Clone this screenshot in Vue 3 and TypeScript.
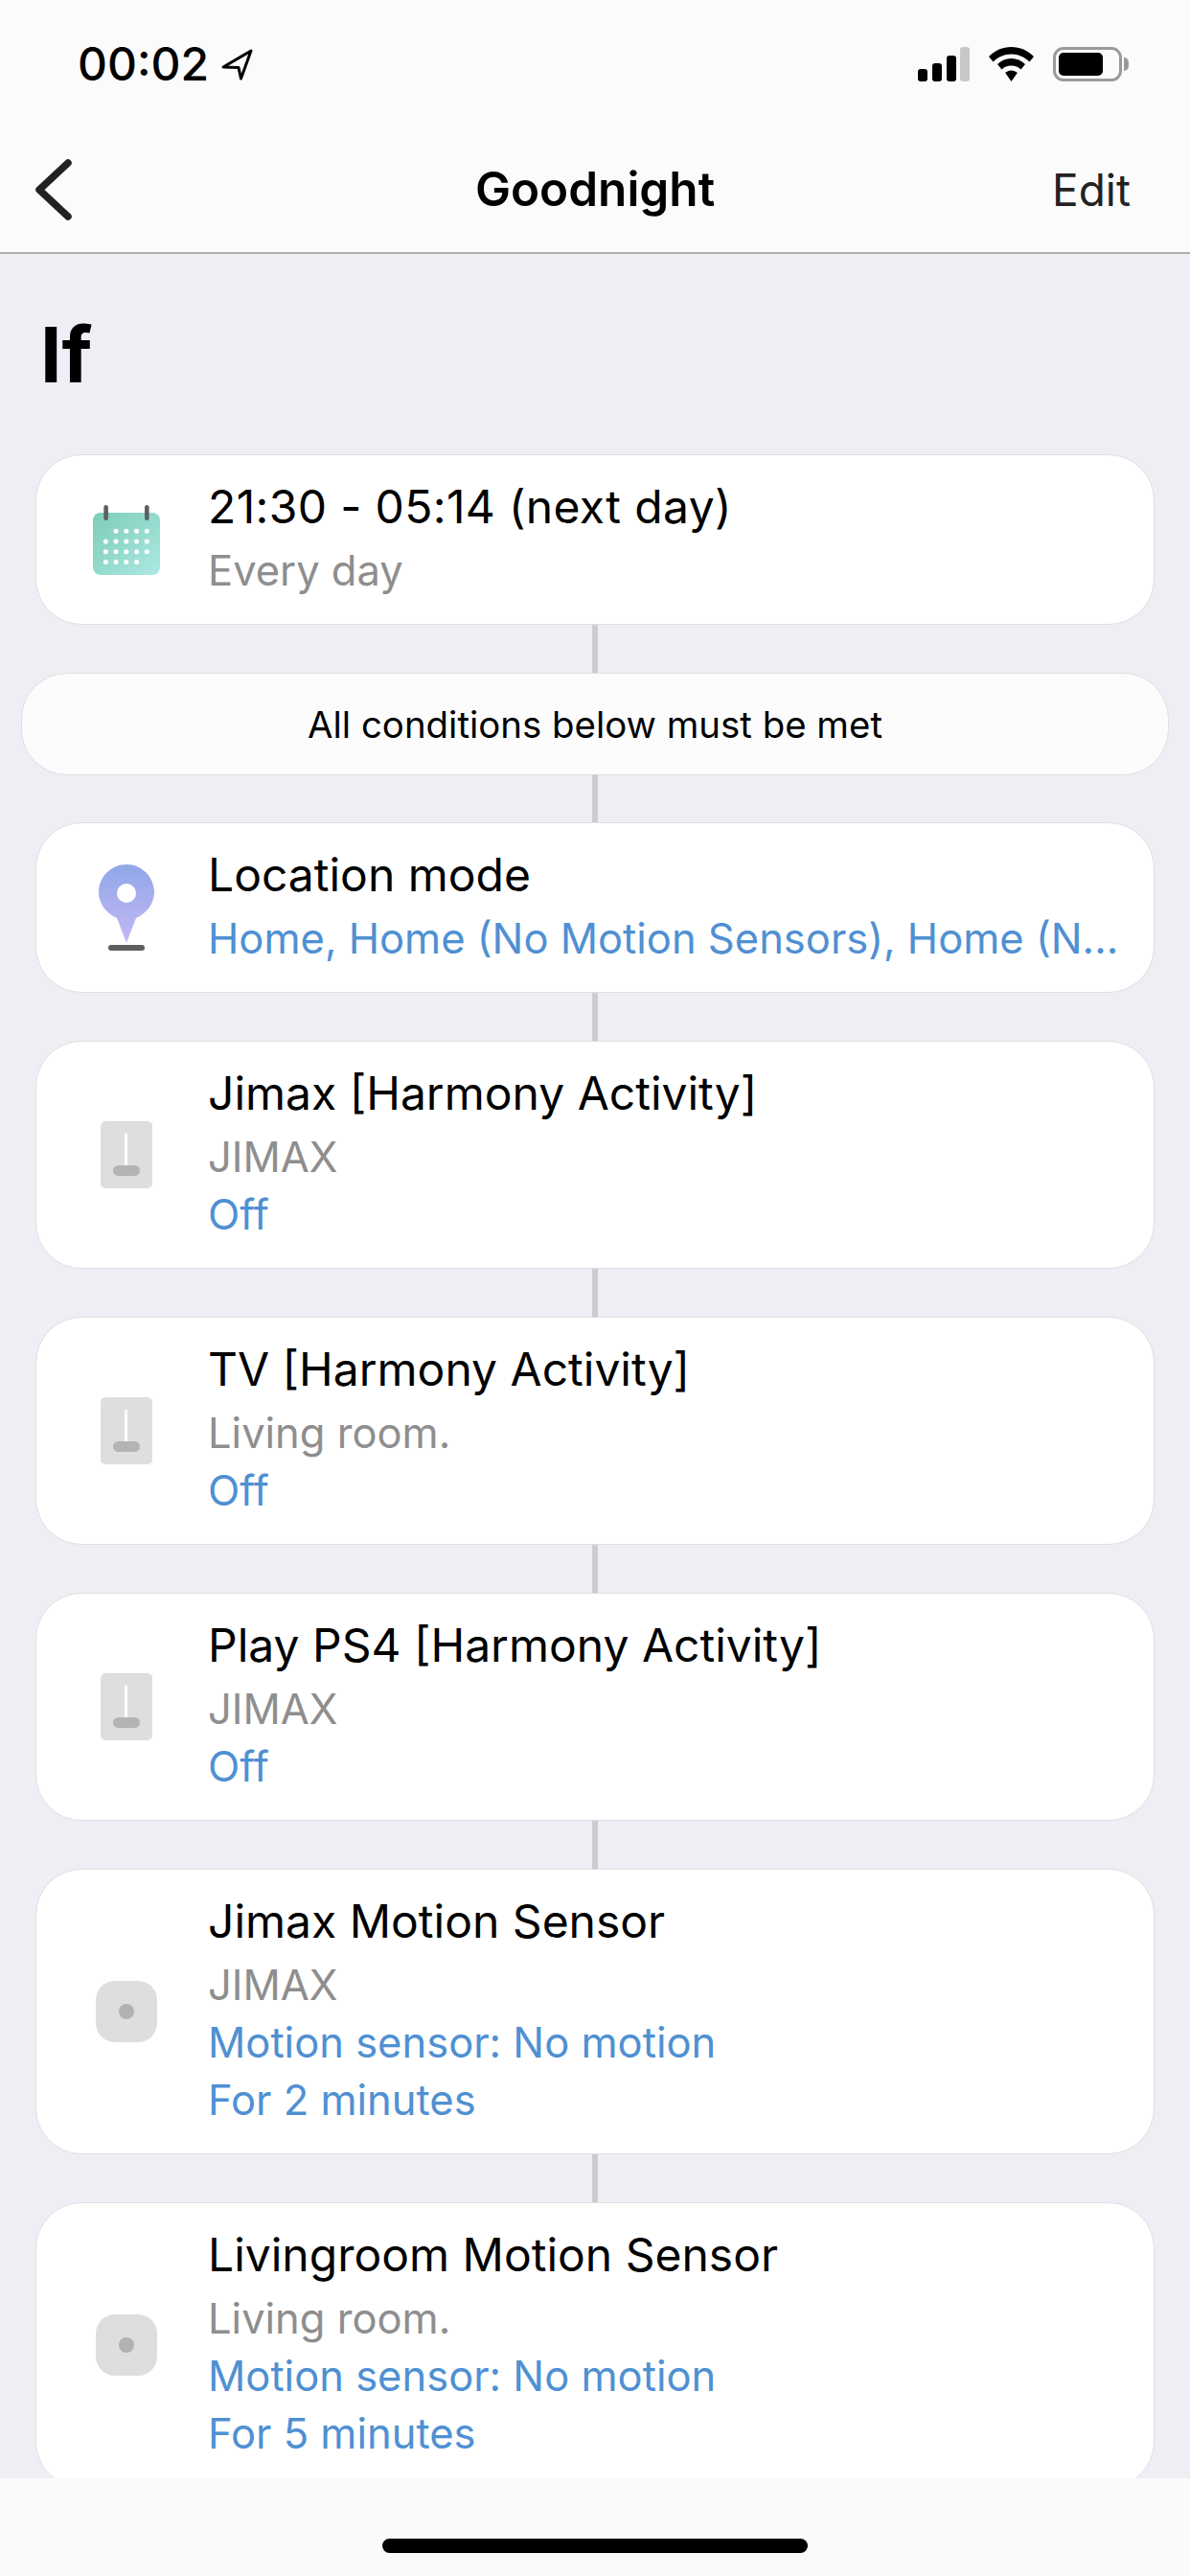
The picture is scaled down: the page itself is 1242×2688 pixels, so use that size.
<script setup lang="ts">
interface Row {
  title: string
  sub?: string
  lines: string[]
  icon: 'switch' | 'sensor'
}
const rows: Row[] = [
  { title: 'Jimax [Harmony Activity]', sub: 'JIMAX', lines: ['Off'], icon: 'switch' },
  { title: 'TV [Harmony Activity]', sub: 'Living room.', lines: ['Off'], icon: 'switch' },
  { title: 'Play PS4 [Harmony Activity]', sub: 'JIMAX', lines: ['Off'], icon: 'switch' },
  { title: 'Jimax Motion Sensor', sub: 'JIMAX', lines: ['Motion sensor: No motion', 'For 2 minutes'], icon: 'sensor' },
  { title: 'Livingroom Motion Sensor', sub: 'Living room.', lines: ['Motion sensor: No motion', 'For 5 minutes'], icon: 'sensor' },
]
const dots: { x: number; y: number }[] = []
for (let r = 0; r < 4; r++) {
  for (let c = 0; c < 5; c++) {
    if ((r === 0 && c === 0) || (r === 3 && c === 4)) continue
    dots.push({ x: 13.3 + c * 10.75, y: 27.3 + r * 10.7 })
  }
}
</script>

<template>
  <div class="page">
    <header class="top">
      <div class="status">
        <div class="clock">
          <span class="time">00:02</span>
          <svg class="arrow" width="33" height="33" viewBox="0 0 33 33">
            <path d="M2 19 L31 2 L20.5 31 L18 19.5 Z" fill="none" stroke="#000" stroke-width="3" stroke-linejoin="round" />
          </svg>
        </div>
        <div class="sys">
          <svg width="54" height="36" viewBox="0 0 54 36">
            <rect x="0" y="23" width="10" height="13" rx="3" fill="#000" />
            <rect x="15" y="17" width="10" height="19" rx="3" fill="#000" />
            <rect x="30" y="9" width="10" height="27" rx="3" fill="#000" />
            <rect x="44" y="0" width="10" height="36" rx="3" fill="#c8c8c8" />
          </svg>
          <svg width="47" height="36" viewBox="0 0 47 36">
            <path d="M23.5 0 C32.5 0 40.5 3.6 47 10 L42.5 15.5 C37.5 10.5 31 7.5 23.5 7.5 C16 7.5 9.5 10.5 4.5 15.5 L0 10 C6.5 3.6 14.5 0 23.5 0 Z" fill="#000" />
            <path d="M23.5 12 C29 12 34 14.2 38 18 L33.5 23.5 C31 21 27.5 19.5 23.5 19.5 C19.5 19.5 16 21 13.5 23.5 L9 18 C13 14.2 18 12 23.5 12 Z" fill="#000" />
            <path d="M23.5 24.5 C26 24.5 28 25.4 29.8 27 L23.5 36 L17.2 27 C19 25.4 21 24.5 23.5 24.5 Z" fill="#000" />
          </svg>
          <div class="battery">
            <div class="shell"><div class="level"></div></div>
            <div class="nub"></div>
          </div>
        </div>
      </div>
      <nav class="nav">
        <svg class="back" width="38" height="64" viewBox="0 0 38 64">
          <path d="M34 4 L4 32 M4 32 L34 60" fill="none" stroke="#222" stroke-width="7.5" stroke-linecap="round" />
        </svg>
        <h1>Goodnight</h1>
        <span class="edit">Edit</span>
      </nav>
    </header>

    <main class="body">
      <h2>If</h2>
      <div class="flow">
        <section class="card">
          <div class="ico">
            <svg width="70" height="73" viewBox="0 0 70 73">
              <defs>
                <linearGradient id="cal" x1="0" y1="0" x2="1" y2="1">
                  <stop offset="0" stop-color="#7ccdb8" />
                  <stop offset="1" stop-color="#ace8e3" />
                </linearGradient>
              </defs>
              <rect x="0" y="8" width="70" height="65" rx="8" fill="url(#cal)" />
              <rect x="11.3" y="0" width="4.6" height="16" rx="2.3" fill="#5f5f5f" />
              <rect x="54" y="0" width="4.6" height="16" rx="2.3" fill="#5f5f5f" />
              <g fill="#fff">
                <circle v-for="(d, i) in dots" :key="i" :cx="d.x" :cy="d.y" r="2.5" />
              </g>
            </svg>
          </div>
          <div class="text">
            <div class="title wide">21:30 - 05:14 (next day)</div>
            <div class="sub">Every day</div>
          </div>
        </section>
        <div class="link"></div>
        <div class="pill">All conditions below must be met</div>
        <div class="link"></div>
        <section class="card">
          <div class="ico">
            <svg width="58" height="90" viewBox="0 0 58 90">
              <defs>
                <linearGradient id="pin" x1="0" y1="0" x2="0" y2="1">
                  <stop offset="0" stop-color="#8fa7e8" />
                  <stop offset="1" stop-color="#c6b8f5" />
                </linearGradient>
              </defs>
              <path d="M29 0 C45 0 58 13 58 29 C58 41 50 51 39 56 L29 82 L19 56 C8 51 0 41 0 29 C0 13 13 0 29 0 Z" fill="url(#pin)" />
              <circle cx="29" cy="30" r="10" fill="#fff" />
              <rect x="10" y="84" width="38" height="6" rx="3" fill="#5f5f5f" />
            </svg>
          </div>
          <div class="text">
            <div class="title">Location mode</div>
            <div class="sub blue">Home, Home (No Motion Sensors), Home (N...</div>
          </div>
        </section>
        <template v-for="row in rows" :key="row.title">
          <div class="link"></div>
          <section class="card">
            <div class="ico">
              <div v-if="row.icon === 'switch'" class="switch"><i class="stem"></i><i class="knob"></i></div>
              <div v-else class="sensor"><i class="dot"></i></div>
            </div>
            <div class="text">
              <div class="title">{{ row.title }}</div>
              <div class="sub">{{ row.sub }}</div>
              <div v-for="l in row.lines" :key="l" class="line">{{ l }}</div>
            </div>
          </section>
        </template>
      </div>
    </main>

    <footer class="bottom"><div class="home"></div></footer>
  </div>
</template>

<style>
html, body { margin: 0; background: #eeeff3; }
</style>

<style scoped>
.page {
  width: 1242px;
  height: 2688px;
  display: flex;
  flex-direction: column;
  overflow: hidden;
  background: #eeeff4;
  font-family: Inter, "Liberation Sans", sans-serif;
  color: #000;
}
.top {
  flex: none;
  height: 265px;
  box-sizing: border-box;
  background: #fbfbfb;
  border-bottom: 2px solid #aeaeae;
}
.status {
  height: 132px;
  box-sizing: border-box;
  padding: 49px 64px 0 81px;
  display: flex;
  justify-content: space-between;
}
.clock { display: flex; align-items: center; height: 36px; gap: 13px; }
.time { font-size: 48px; font-weight: 500; line-height: 36px; }
.sys { display: flex; gap: 20px; height: 36px; }
.battery { display: flex; align-items: center; gap: 2px; }
.shell {
  width: 72px;
  height: 36px;
  box-sizing: border-box;
  border: 3px solid #9a9a9a;
  border-radius: 11px;
  padding: 3px;
}
.level { width: 46px; height: 24px; background: #000; border-radius: 5px; }
.nub { width: 5px; height: 14px; background: #9a9a9a; border-radius: 0 5px 5px 0; }
.nav {
  position: relative;
  height: 131px;
  display: flex;
  align-items: center;
  justify-content: space-between;
  padding: 0 62px 0 37px;
}
.nav h1 {
  position: absolute;
  left: 0;
  right: 0;
  top: 0;
  margin: 0;
  text-align: center;
  font-size: 49.5px;
  line-height: 131px;
  font-weight: 600;
  pointer-events: none;
}
.edit { font-size: 46px; color: #222; font-weight: 400; }
.body { flex: 1; min-height: 0; overflow: hidden; padding: 0 37px; }
.body h2 {
  margin: 0;
  padding: 60px 5px 0;
  height: 209px;
  box-sizing: border-box;
  font-size: 80px;
  line-height: 90px;
  font-weight: 700;
}
.flow { display: flex; flex-direction: column; }
.link { flex: none; width: 6px; height: 50px; background: #cdcdd0; align-self: center; }
.card {
  flex: none;
  display: flex;
  align-items: center;
  box-sizing: border-box;
  background: #fff;
  border: 1.5px solid #dedee2;
  border-radius: 48px;
  padding: 24px 30px 24px 0;
}
.ico { flex: none; width: 187px; margin-right: -8px; display: flex; justify-content: center; }
.text { min-width: 0; padding-bottom: 2px; }
.title { font-size: 48px; line-height: 60px; white-space: nowrap; }
.wide { letter-spacing: 0.36px; }
.sub { font-size: 43.5px; line-height: 60px; margin-top: 6px; color: #8e8e8e; white-space: nowrap; }
.line, .blue { font-size: 43.5px; line-height: 60px; color: #4f90d2; white-space: nowrap; }
.text .blue { margin-top: 6px; }
.pill {
  flex: none;
  margin: 0 -15px -1px;
  width: 1198px;
  box-sizing: border-box;
  height: 107px;
  border: 1.5px solid #dedee2;
  border-radius: 48px;
  background: #fcfcfc;
  font-size: 38.4px;
  display: flex;
  align-items: center;
  justify-content: center;
}
.switch {
  position: relative;
  width: 54px;
  height: 70px;
  background: #dedede;
  border-radius: 5px;
}
.stem { position: absolute; left: 25.5px; top: 13px; width: 3px; height: 33px; background: #fff; }
.knob { position: absolute; left: 13px; top: 46px; width: 28px; height: 11px; background: #b4b4b4; border-radius: 6px; }
.sensor {
  width: 64px;
  height: 64px;
  background: #dedede;
  border-radius: 20px;
  display: flex;
  align-items: center;
  justify-content: center;
}
.dot { width: 16px; height: 16px; border-radius: 50%; background: #b2b2b2; }
.bottom {
  flex: none;
  height: 102px;
  background: #fafafa;
  display: flex;
  justify-content: center;
  box-sizing: border-box;
  padding-top: 63px;
  position: relative;
}
.home { width: 444px; height: 15px; background: #000; border-radius: 8px; }
</style>
